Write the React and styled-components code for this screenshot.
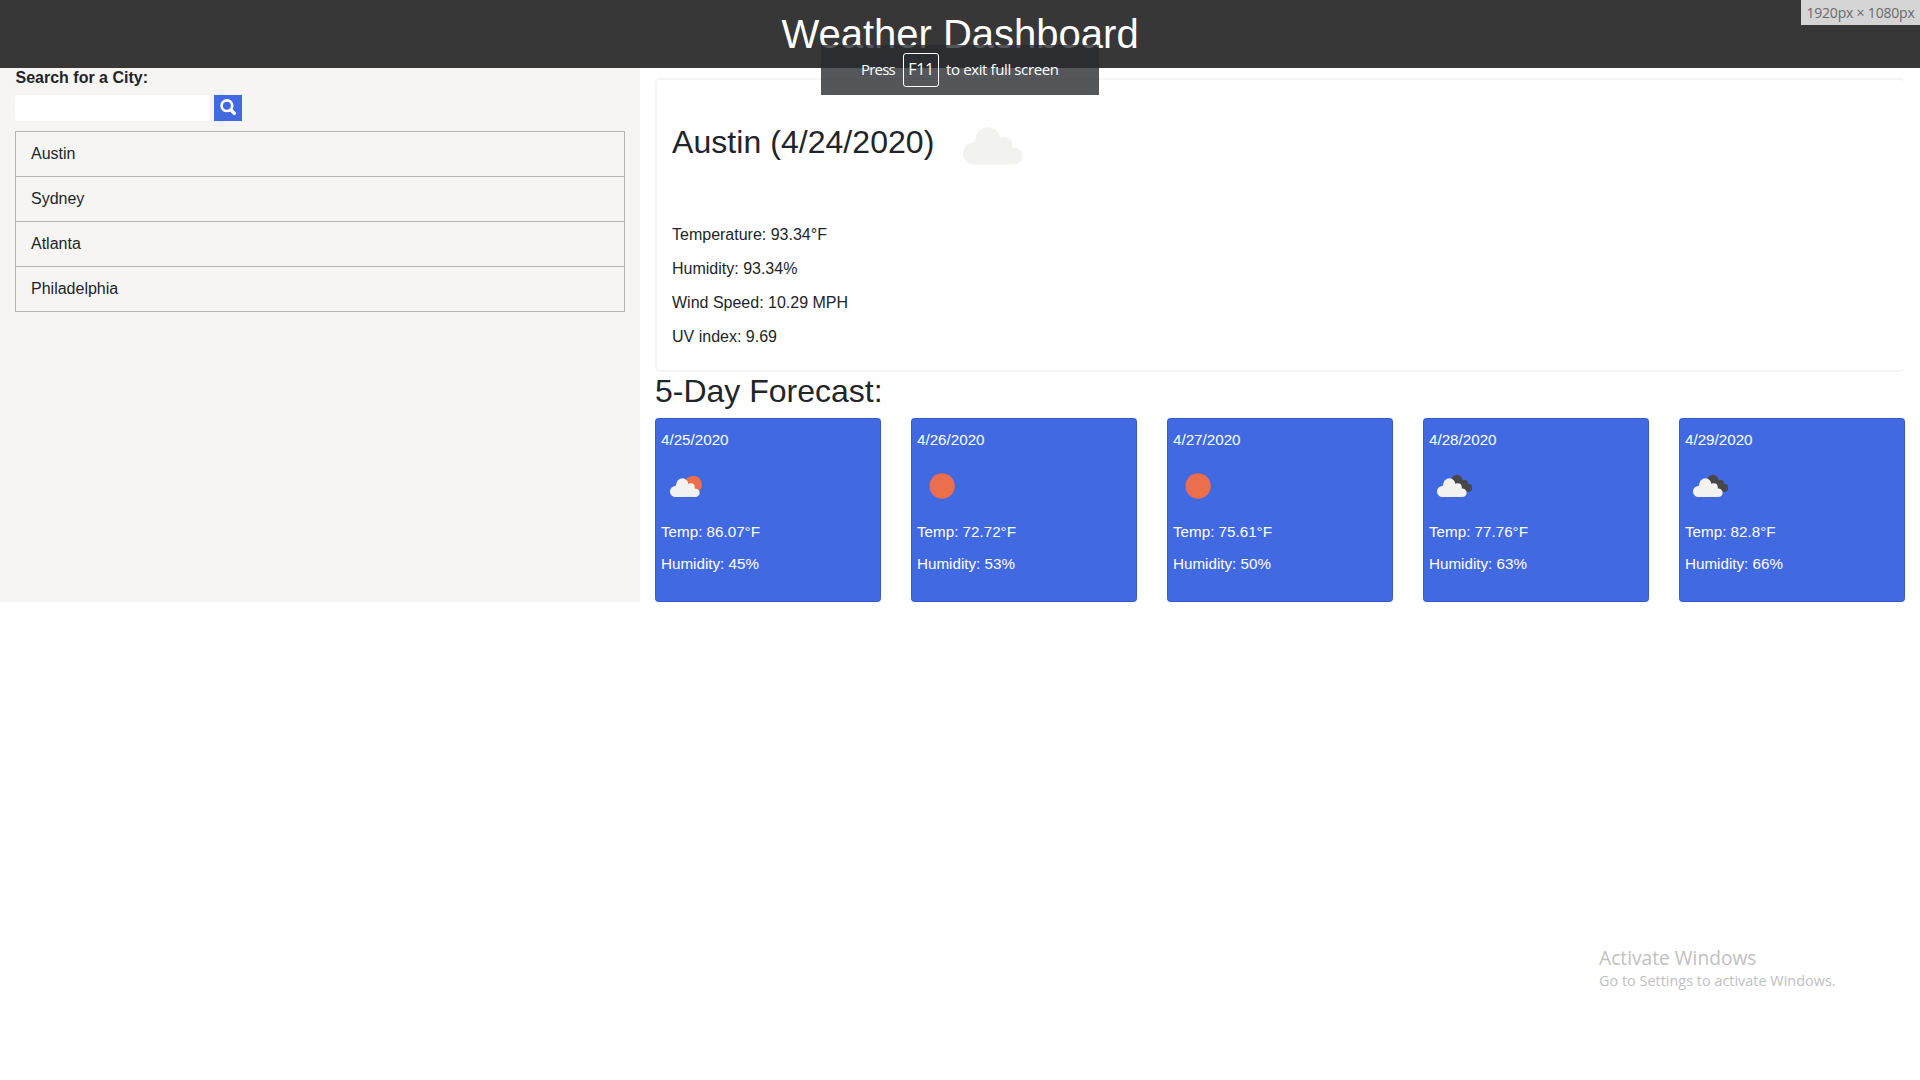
import React from "react";
import styled, { createGlobalStyle } from "styled-components";

const GlobalStyle = createGlobalStyle`
  *, *::before, *::after { box-sizing: border-box; }
  body {
    margin: 0;
    background: #fff;
    color: #212529;
    font: 400 16px/1.5 "Liberation Sans", Arial, sans-serif;
  }
  h1, h2, p, ul { margin: 0; padding: 0; font-weight: 400; }
`;

const Page = styled.div`
  min-height: 1080px;
`;

const Header = styled.header`
  height: 68px;
  padding: 10px 0;
  background: #373737;
  text-align: center;
`;

const Title = styled.h1`
  color: #fff;
  font-size: 40px;
  line-height: 48px;
`;

const Layout = styled.div`
  display: grid;
  grid-template-columns: 640px 1fr;
  height: 534px;
`;

const Sidebar = styled.aside`
  padding: 0 15px;
  background: #f6f5f4;
`;

const Label = styled.label`
  display: block;
  height: 27px;
  padding-left: 0.5px;
  font-weight: 700;
  line-height: 19px;
`;

const SearchRow = styled.form`
  display: flex;
  gap: 4px;
  margin-bottom: 10px;
`;

const SearchInput = styled.input`
  width: 195px;
  height: 26px;
  padding: 1px 4px;
  border: 0;
  border-radius: 4px;
  background: #fff;
`;

const SearchButton = styled.button`
  display: flex;
  justify-content: center;
  width: 28px;
  height: 26px;
  padding: 4px 0 0;
  border: 0;
  background: #4169e1;
`;

const CityList = styled.ul`
  list-style: none;
  border: 1px solid #b4b4b2;
`;

const City = styled.li`
  height: 45px;
  padding: 10px 15px;
  line-height: 24px;
  border-bottom: 1px solid #b4b4b2;
  &:last-child { height: 44px; border-bottom: 0; }
`;

const Main = styled.main`
  padding: 10px 15px 0;
`;

const Current = styled.section`
  height: 294px;
  padding: 15px;
  border: 2px solid #f5f5f5;
  border-right: 0;
  border-radius: 5px;
`;

const CurrentHead = styled.div`
  display: flex;
  align-items: center;
  gap: 9px;
  height: 100px;
  margin-bottom: 28px;
`;

const Heading = styled.h2`
  font-size: 32px;
  line-height: 38px;
`;

const CityHeading = styled(Heading)`
  padding-bottom: 6px;
  letter-spacing: 0.05px;
`;

const Stat = styled.p`
  margin-bottom: 10px;
  line-height: 24px;
`;

const Cards = styled.div`
  display: grid;
  grid-template-columns: repeat(5, 1fr);
  gap: 30px;
  margin-top: 8px;
`;

const Card = styled.article`
  height: 184px;
  padding: 10px 5px;
  border: 1px solid rgba(0, 0, 0, 0.125);
  border-radius: 4px;
  background: #4169e1;
  color: #fff;
`;

const CardText = styled.p`
  margin-bottom: 10px;
  font-size: 15.2px;
  line-height: 22px;
`;

const WeatherSvg = styled.svg`
  display: block;
  width: ${(p) => p.$size}px;
  height: ${(p) => p.$size}px;
  margin-bottom: ${(p) => p.$gap || 0}px;
`;

const systemFont = `"Open Sans", "Noto Sans", sans-serif`;

const FullscreenNotice = styled.div`
  position: absolute;
  top: 45px;
  left: 821px;
  display: flex;
  align-items: center;
  gap: 7px;
  width: 278px;
  height: 50px;
  padding-left: 40px;
  background: rgba(40, 43, 48, 0.795);
  color: #fff;
  font: 400 15px/20px ${systemFont};
  letter-spacing: -0.38px;
  white-space: nowrap;
`;

const NoticeText = styled.span`
  padding-bottom: 2px;
`;

const PressText = styled(NoticeText)`
  width: 35px;
  letter-spacing: -0.8px;
`;

const Key = styled.kbd`
  width: 36px;
  height: 34px;
  border: 1px solid #fff;
  border-radius: 3px;
  font: inherit;
  font-size: 16px;
  line-height: 31px;
  text-align: center;
`;

const SizeBadge = styled.div`
  position: absolute;
  top: 0;
  right: 0;
  width: 119px;
  height: 25px;
  background: #d5d5d5;
  color: #6a6a6a;
  font: 400 14px/26px ${systemFont};
  letter-spacing: -0.2px;
  text-align: center;
  white-space: nowrap;
`;

const Watermark = styled.div`
  position: absolute;
  top: 944px;
  left: 1599px;
  color: #bfbfbf;
  font-family: ${systemFont};
  white-space: nowrap;
`;

const WatermarkTitle = styled.div`
  font-size: 19.2px;
  line-height: 28px;
`;

const WatermarkText = styled.div`
  font-size: 14.45px;
  line-height: 18px;
`;

function Cloud({ transform, fill = "#f2f2f1" }) {
  return (
    <g transform={transform} fill={fill}>
      <circle cx="24.7" cy="12.9" r="12.2" />
      <circle cx="11" cy="27" r="11" />
      <circle cx="41.5" cy="18.6" r="8" />
      <circle cx="50.8" cy="29.5" r="8.5" />
      <path d="M11 16 L13 12 H36 L49 20 V38 H11Z" />
    </g>
  );
}

function WeatherIcon({ kind, size, gap }) {
  return (
    <WeatherSvg $size={size} $gap={gap} viewBox="0 0 100 100" aria-hidden="true">
      {kind === "sun" && <circle cx="50.2" cy="50" r="25.3" fill="#ec6e4c" />}
      {kind === "partly" && (
        <>
          <circle cx="64.5" cy="47" r="17.4" fill="#ec6e4c" />
          <path d="M47 43 Q54 40 58 46 Q66 46 69 54 Q75 54 78 59 L72 66 H50Z" fill="#e2583a" />
          <Cloud transform="translate(18 34)" />
        </>
      )}
      {kind === "broken" && (
        <>
          <g fill="#484848">
            <circle cx="56" cy="38.5" r="11" />
            <circle cx="70.5" cy="45" r="7.5" />
            <circle cx="78.5" cy="53.5" r="7.8" />
            <path d="M56 36 L72 40 L79 61.3 L60 61.3Z" />
          </g>
          <Cloud transform="translate(16 34)" />
        </>
      )}
      {kind === "cloud" && <Cloud transform="translate(20 31.5)" />}
    </WeatherSvg>
  );
}

function SearchIcon() {
  return (
    <svg width="16" height="17" viewBox="0 0 16 17" fill="none" stroke="#fff" aria-hidden="true">
      <circle cx="6.9" cy="6.7" r="5.3" strokeWidth="2.7" />
      <path d="M10.8 10.8 L14.3 14.4" strokeWidth="3.4" strokeLinecap="round" />
    </svg>
  );
}

const cities = ["Austin", "Sydney", "Atlanta", "Philadelphia"];

const stats = [
  "Temperature: 93.34°F",
  "Humidity: 93.34%",
  "Wind Speed: 10.29 MPH",
  "UV index: 9.69",
];

const forecast = [
  { date: "4/25/2020", kind: "partly", temp: "86.07", humidity: 45 },
  { date: "4/26/2020", kind: "sun", temp: "72.72", humidity: 53 },
  { date: "4/27/2020", kind: "sun", temp: "75.61", humidity: 50 },
  { date: "4/28/2020", kind: "broken", temp: "77.76", humidity: 63 },
  { date: "4/29/2020", kind: "broken", temp: "82.8", humidity: 66 },
];

export default function App() {
  return (
    <Page>
      <GlobalStyle />
      <Header>
        <Title>Weather Dashboard</Title>
      </Header>
      <Layout>
        <Sidebar>
          <Label htmlFor="city">Search for a City:</Label>
          <SearchRow>
            <SearchInput id="city" />
            <SearchButton type="button" aria-label="Search">
              <SearchIcon />
            </SearchButton>
          </SearchRow>
          <CityList>
            {cities.map((c) => (
              <City key={c}>{c}</City>
            ))}
          </CityList>
        </Sidebar>
        <Main>
          <Current>
            <CurrentHead>
              <CityHeading>Austin (4/24/2020)</CityHeading>
              <WeatherIcon kind="cloud" size={100} />
            </CurrentHead>
            {stats.map((s) => (
              <Stat key={s}>{s}</Stat>
            ))}
          </Current>
          <Heading>5-Day Forecast:</Heading>
          <Cards>
            {forecast.map((d) => (
              <Card key={d.date}>
                <CardText>{d.date}</CardText>
                <WeatherIcon kind={d.kind} size={50} gap={10} />
                <CardText>{`Temp: ${d.temp}°F`}</CardText>
                <CardText>{`Humidity: ${d.humidity}%`}</CardText>
              </Card>
            ))}
          </Cards>
        </Main>
      </Layout>
      <FullscreenNotice>
        <PressText>Press</PressText>
        <Key>F11</Key>
        <NoticeText>to exit full screen</NoticeText>
      </FullscreenNotice>
      <SizeBadge>1920px × 1080px</SizeBadge>
      <Watermark>
        <WatermarkTitle>Activate Windows</WatermarkTitle>
        <WatermarkText>Go to Settings to activate Windows.</WatermarkText>
      </Watermark>
    </Page>
  );
}
